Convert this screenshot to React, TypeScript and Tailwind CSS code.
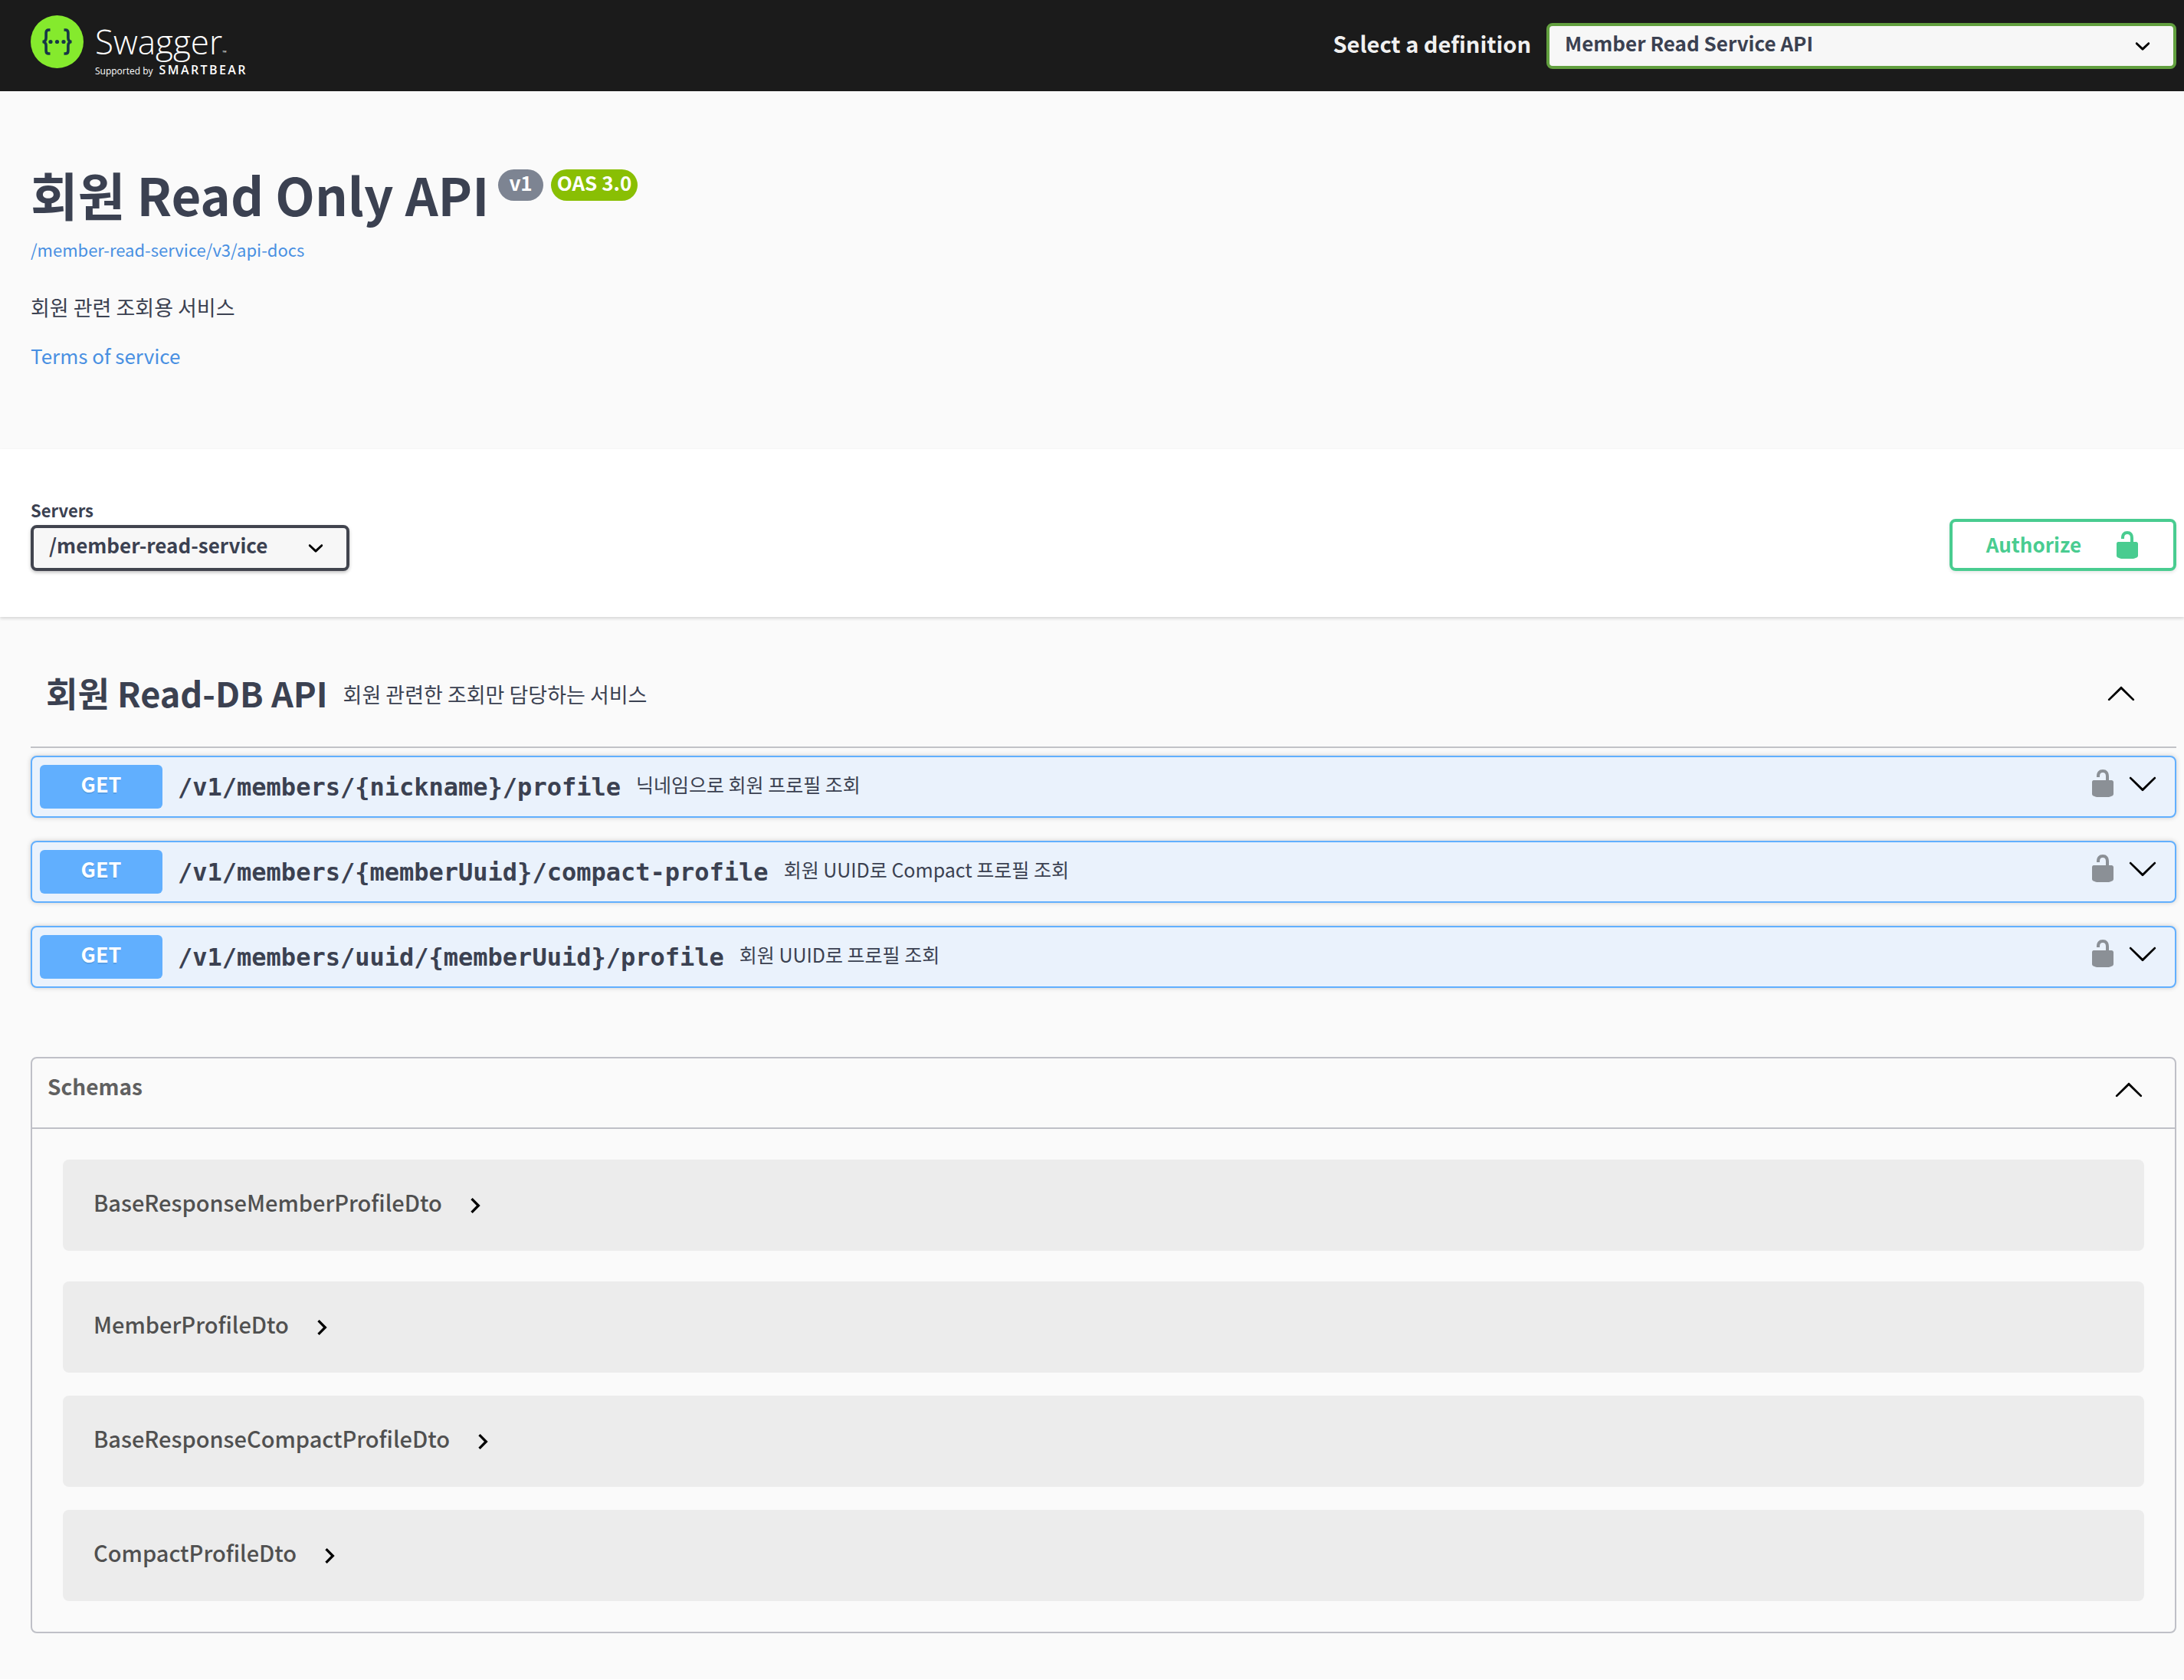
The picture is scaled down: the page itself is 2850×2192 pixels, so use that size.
import React from "react";

const CHEVRON_UP =
  "M17.418 14.908c.272.268.709.268.979 0s.271-.701 0-.969l-7.908-7.83c-.27-.268-.707-.268-.979 0l-7.908 7.83c-.27.268-.27.701 0 .969.271.268.709.268.979 0L10 7.767l7.418 7.141z";
const CHEVRON_DOWN =
  "M17.418 5.092c.272-.268.709-.268.979 0s.271.701 0 .969l-7.908 7.83c-.27.268-.707.268-.979 0l-7.908-7.83c-.27-.268-.27-.701 0-.969.271-.268.709-.268.979 0L10 12.233l7.418-7.141z";
const UNLOCKED =
  "M15.8 8H14V5.6C14 2.703 12.665 1 10 1 7.334 1 6 2.703 6 5.6V6h2v-.801C8 3.754 8.797 3 10 3c1.203 0 2 .754 2 2.199V8H4c-.553 0-1 .646-1 1.199V17c0 .549.428 1.139.951 1.307l1.197.387C5.672 18.861 6.55 19 7.1 19h5.8c.549 0 1.428-.139 1.951-.307l1.196-.387c.524-.167.953-.757.953-1.306V9.199C17 8.646 16.352 8 15.8 8z";

function Icon({ d, className = "" }: { d: string; className?: string }) {
  return (
    <svg viewBox="0 0 20 20" className={`size-10 shrink-0 fill-current ${className}`} aria-hidden="true">
      <path d={d} />
    </svg>
  );
}

function SelectArrow({ className }: { className: string }) {
  return (
    <svg viewBox="0 0 20 20" className={`pointer-events-none absolute size-10 fill-black ${className}`} aria-hidden="true">
      <path d="M13.418 7.859c.271-.268.709-.268.978 0 .27.268.272.701 0 .969l-3.908 3.83c-.27.268-.707.268-.979 0l-3.908-3.83c-.27-.267-.27-.701 0-.969.271-.268.709-.268.978 0L10 11l3.418-3.141z" />
    </svg>
  );
}

const operations = [
  { path: "/v1/members/{nickname}/profile", summary: "닉네임으로 회원 프로필 조회" },
  { path: "/v1/members/{memberUuid}/compact-profile", summary: "회원 UUID로 Compact 프로필 조회" },
  { path: "/v1/members/uuid/{memberUuid}/profile", summary: "회원 UUID로 프로필 조회" },
];

const schemas = [
  "BaseResponseMemberProfileDto",
  "MemberProfileDto",
  "BaseResponseCompactProfileDto",
  "CompactProfileDto",
];

function Logo() {
  return (
    <a href="#" className="flex items-start gap-3.5 text-white font-['Open_Sans',sans-serif]" aria-label="Swagger">
      <svg viewBox="0 0 70 70" className="mt-5 size-[70px]" aria-hidden="true">
        <circle cx="34.5" cy="34.5" r="34.5" fill="#85ea2d" />
        <g fill="none" stroke="#173647" strokeWidth="3.6">
          <path d="M25.5 19h-1.8c-2.6 0-3.6 1.4-3.6 3.8v6.4c0 3-1.6 5.2-4.6 5.3 3 .1 4.6 2.3 4.6 5.3v6.4c0 2.4 1 3.8 3.6 3.8h1.8" />
          <path d="M43.5 19h1.8c2.6 0 3.6 1.4 3.6 3.8v6.4c0 3 1.6 5.2 4.6 5.3-3 .1-4.6 2.3-4.6 5.3v6.4c0 2.4-1 3.8-3.6 3.8h-1.8" />
        </g>
        <g fill="#173647">
          <circle cx="26" cy="34.5" r="2.6" />
          <circle cx="34.5" cy="34.5" r="2.6" />
          <circle cx="43" cy="34.5" r="2.6" />
        </g>
      </svg>
      <span className="flex flex-col pt-7">
        <span className="flex items-end">
          <span className="text-[44px] leading-[52px] font-[350]">Swagger</span>
          <span className="pb-2 text-[7px] leading-none">™</span>
        </span>
        <span className="flex items-baseline gap-2 leading-5">
          <span className="text-xs">Supported by</span>
          <span className="text-base leading-[22px] font-semibold tracking-[0.15em]">SMARTBEAR</span>
        </span>
      </span>
    </a>
  );
}

export default function App() {
  return (
    <div className="bg-[#fafafa] pb-15 font-['Noto_Sans_CJK_KR',sans-serif] text-[#3b4151]">
      <header className="flex h-[119px] items-start justify-between bg-[#1b1b1b] pr-2.5 pl-10">
        <Logo />
        <div className="flex items-start gap-5 pt-[30px]">
          <label htmlFor="definition" className="text-[29px] leading-[53px] font-bold text-[#f0f0f0]">
            Select a definition
          </label>
          <div className="relative w-[822px]">
            <select
              id="definition"
              className="h-15 w-full appearance-none rounded-lg border-4 border-[#62a03f] bg-[#f7f7f7] pb-2.5 pl-5 text-[26px] font-bold"
            >
              <option>Member Read Service API</option>
            </select>
            <SelectArrow className="top-2.5 right-6" />
          </div>
        </div>
      </header>

      <main>
        <section className="pt-[94px] pr-2.5 pb-[102px] pl-10">
          <div className="flex items-start gap-3">
            <h1 className="text-[67px] leading-20 font-bold">회원 Read Only API</h1>
            <div className="mt-2 flex gap-2.5 text-[26px] leading-[33px] font-bold text-white">
              <span className="rounded-full bg-[#7d8492] px-3.5 pb-2">v1</span>
              <span className="rounded-full bg-[#89bf04] px-2 pb-2">OAS 3.0</span>
            </div>
          </div>
          <a href="#" className="mt-4 block w-fit text-[22px] leading-8 text-[#4990e2]">
            /member-read-service/v3/api-docs
          </a>
          <p className="mt-10 text-[27px] leading-10">회원 관련 조회용 서비스</p>
          <a href="#" className="mt-[23px] block w-fit text-[26px] leading-10 text-[#4990e2]">
            Terms of service
          </a>
        </section>

        <section className="flex items-end justify-between bg-white pt-[65px] pr-2.5 pb-15 pl-10 shadow-[0_2px_4px_rgba(0,0,0,0.15)]">
          <div>
            <label htmlFor="server" className="block text-[22px] leading-7 font-bold">
              Servers
            </label>
            <div className="relative mt-1.5 w-[416px]">
              <select
                id="server"
                className="block h-15 w-full appearance-none rounded-lg border-4 border-[#41444e] bg-[#f7f7f7] pb-2.5 pl-5 text-[26px] font-bold shadow-[0_2px_4px_rgba(0,0,0,0.25)]"
              >
                <option>/member-read-service</option>
              </select>
              <SelectArrow className="top-2.5 right-6" />
            </div>
          </div>
          <button className="flex h-17 items-center gap-10 rounded-lg border-4 border-[#49cc90] pr-10 pl-11 text-[26px] font-bold text-[#49cc90] shadow-[0_2px_4px_rgba(0,0,0,0.1)]">
            <span className="pb-1">Authorize</span>
            <Icon d={UNLOCKED} />
          </button>
        </section>

        <section className="pt-[69px] pr-2.5 pl-10">
          <div className="flex items-center border-b-2 border-[#c1c2c7] pr-[52px] pb-10 pl-5">
            <h2 className="text-[45px] leading-15 font-bold">회원 Read-DB API</h2>
            <p className="ml-5 flex-1 pt-1 text-[27px] leading-10">회원 관련한 조회만 담당하는 서비스</p>
            <button aria-label="Collapse section">
              <Icon d={CHEVRON_UP} className="text-black" />
            </button>
          </div>

          <div className="mt-2.5 flex flex-col gap-[30px]">
            {operations.map((op) => (
              <div
                key={op.path}
                className="flex items-center rounded-lg border-2 border-[#61affe] bg-[#eaf2fc] py-2.5 pr-[22px] pl-2.5 shadow-[0_0_6px_rgba(0,0,0,0.19)]"
              >
                <span className="w-40 rounded-md bg-[#61affe] pb-2 text-center text-[27px] leading-[49px] font-bold text-white [text-shadow:0_2px_0_rgba(0,0,0,0.1)]">
                  GET
                </span>
                <a href="#" className="ml-5 font-['DejaVu_Sans_Mono',monospace] text-[32px] leading-10 font-bold">
                  {op.path}
                </a>
                <span className="ml-5 flex-1 pb-2 text-[25px] leading-9">{op.summary}</span>
                <span className="flex items-center gap-3 pb-1.5">
                  <button aria-label="Authorization" className="pb-1">
                    <Icon d={UNLOCKED} className="text-black opacity-40" />
                  </button>
                  <button aria-label="Expand operation">
                    <Icon d={CHEVRON_DOWN} className="text-black" />
                  </button>
                </span>
              </div>
            ))}
          </div>
        </section>

        <section className="mt-[90px] mr-2.5 ml-10 rounded-lg border-2 border-[#bfc0c7]">
          <div className="flex items-center justify-between border-b-2 border-[#bfc0c7] pt-[15px] pr-10 pb-[25px] pl-5">
            <h2 className="pb-2 text-[28px] leading-[42px] font-bold text-[#606060]">Schemas</h2>
            <button aria-label="Collapse schemas">
              <Icon d={CHEVRON_UP} className="text-black" />
            </button>
          </div>
          <div className="flex flex-col gap-[30px] p-10">
            {schemas.map((name) => (
              <div key={name} className="rounded-lg bg-[#ececec] px-10 py-7 first:mb-2.5">
                <button className="flex items-center gap-[23px] text-[#505050]">
                  <span className="pb-2 text-[29px] leading-[55px] font-medium">{name}</span>
                  <svg viewBox="0 0 24 24" className="size-10 fill-black" aria-hidden="true">
                    <path d="M10 6L8.59 7.41 13.17 12l-4.58 4.59L10 18l6-6z" />
                  </svg>
                </button>
              </div>
            ))}
          </div>
        </section>
      </main>
    </div>
  );
}
